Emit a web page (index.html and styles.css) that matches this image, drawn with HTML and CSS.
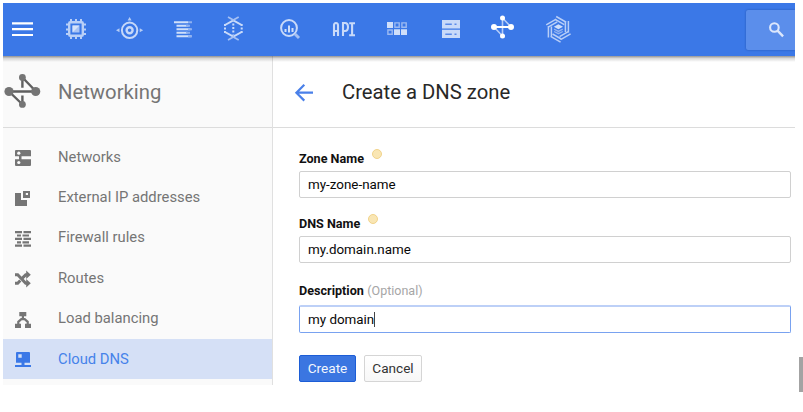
FILE: index.html
```html
<!DOCTYPE html>
<html lang="en">
<head>
<meta charset="utf-8">
<title>Create a DNS zone</title>
<link rel="stylesheet" href="styles.css">
</head>
<body>
<div class="window">
  <header class="topbar">
    <nav class="tools">
      <svg viewBox="7 13 32 32"><path stroke="#fff" stroke-width="2.2" d="M12 23.4h21M12 29.2h21M12 35h21"/></svg>
      <svg viewBox="60 13 32 32"><g fill="none" stroke="#b9cff7"><rect x="69.2" y="22.2" width="13.6" height="13.6" rx="1" stroke-width="2.4"/><path stroke-width="2" d="M71 19v3M76 19v3M81 19v3M71 36v3M76 36v3M81 36v3M66 24.5h3M66 29.5h3M66 34h3M83 24.5h3M83 29.5h3M83 34h3"/></g><path fill="#a9c3f4" d="M72.5 25.5h7v7h-7z"/><path fill="#d6e3fb" d="M72.5 25.5h7l-7 7z"/></svg>
      <svg viewBox="113 13 32 32"><g fill="none" stroke="#c6d8f9" stroke-width="2"><circle cx="129.6" cy="30.3" r="7.7"/><circle cx="129.6" cy="30.3" r="3" stroke-width="2.4"/></g><path fill="#b5ccf6" d="M129.6 17l2 3.5h-4zM116 30.3l3.5-2v4zM143.2 30.3l-3.5-2v4z"/></svg>
      <svg viewBox="166 13 32 32"><path stroke="#d0dffa" stroke-width="2" d="M174 22.3h14M176.5 25.8h12M176.5 29.3h14M176.5 32.7h11M176.5 36.2h15"/><path stroke="#8eb0f0" stroke-width="2" d="M188 22.3h4M186 25.8h4M188 29.3h4M186 32.7h4M188 36.2h4"/></svg>
      <svg viewBox="219 13 32 32"><g fill="none" stroke="#c9daf9" stroke-width="2"><path d="M225 25l8.3-4.7 8.4 4.7M225 32l8.3 4.7 8.4-4.7"/><path stroke-dasharray="2 1.5" d="M225 24v9M233.3 23.5v11M241.7 24v9"/></g><path fill="none" stroke="#a5c0f3" stroke-width="1.7" d="M228 17l5.3 3 5.4-3M228 40l5.3-3 5.4 3"/></svg>
      <svg viewBox="272 13 32 32"><circle cx="289" cy="28" r="7.9" fill="none" stroke="#c9daf9" stroke-width="2"/><path stroke="#a5c0f3" stroke-width="3" d="M295 34l4 4"/><path stroke="#d0dffa" stroke-width="2" d="M285.5 29v3M289 25.5v7M292.5 28v4"/></svg>
      <svg viewBox="325 13 32 32"><g fill="none" stroke="#c9daf9" stroke-width="2.1"><path d="M334 36V25.5q0-2.5 2-2.5t2 2.5V36M334 31h4M343 36V23h2q3 0 3 4t-3 4h-2M349.2 23.3h5.8M349.2 35.3h5.8M352.1 23v12"/></g></svg>
      <svg viewBox="378 13 32 32"><path fill="#d0dffa" d="M387 22h6v6h-6zM394 29.3h6v5.7h-6zM401 29.3h6v5.7h-6z"/><path fill="none" stroke="#9dbaf2" stroke-width="1.4" d="M394.9 22.9h4.3v4.3h-4.3zM401.9 22.9h4.3v4.3h-4.3zM387.9 30h4.3v4.3h-4.3z"/></svg>
      <svg viewBox="431 13 32 32"><path fill="#c9daf9" d="M442 20h18v8.4h-18zM442 29.8h18v8.2h-18z"/><path stroke="#5989e9" stroke-width="1.6" d="M445.3 24.2h6.5M454.5 24.2h2M445.3 34.2h6.5M454.5 34.2h2"/></svg>
      <svg viewBox="484 13 32 32"><path fill="none" stroke="#b6cdf7" stroke-width="1.6" d="M511 27l-8.5-9M494 27l8.5 9M502.5 18v18"/><path stroke="#fff" stroke-width="2" d="M494 27h17"/><g fill="#fff"><circle cx="494" cy="27" r="3"/><circle cx="511" cy="27" r="3"/><circle cx="502.5" cy="18" r="2.5"/><circle cx="502.5" cy="36" r="2.5"/></g></svg>
      <svg viewBox="537 13 32 32"><g fill="none" stroke="#b8cef7" stroke-width="1.5"><path id="blade" d="M568.4 21v11.5M565.4 22v10"/><use href="#blade" transform="rotate(60 558.4 29.3)"/><use href="#blade" transform="rotate(120 558.4 29.3)"/><use href="#blade" transform="rotate(180 558.4 29.3)"/><use href="#blade" transform="rotate(240 558.4 29.3)"/><use href="#blade" transform="rotate(300 558.4 29.3)"/></g><path fill="#d0dffa" d="M553.8 26.8l4.6-2.5 4.6 2.5-4.6 2.5z"/><path fill="none" stroke="#94b4f1" stroke-width="1.3" d="M554 29.2l4.4 2.2 4.4-2.2M554 31.5l4.4 2.2 4.4-2.2"/></svg>
    </nav>
    <div class="search"><svg viewBox="767 20 18 20"><circle cx="774.4" cy="27.5" r="4.3" fill="none" stroke="#dce7fc" stroke-width="2.1"/><path stroke="#dce7fc" stroke-width="2.4" d="M777.5 30.7l5.6 5.6"/></svg></div>
  </header>
  <div class="body">
    <aside class="sidebar">
      <div class="product">
        <svg viewBox="3 73 40 36"><path fill="none" stroke="#606060" stroke-width="2.4" d="M9 91.5h27M36 91.5L22.5 77.5M9 91.5l13.5 13M22.4 78v9.8M22.4 95.5v9"/><g fill="#757575"><circle cx="9" cy="91.5" r="4.6"/><circle cx="35.7" cy="91.5" r="4.6"/><circle cx="22.4" cy="77.4" r="3.4"/><circle cx="22.4" cy="104.4" r="3.4"/></g></svg>
        <span>Networking</span>
      </div>
      <ul class="menu">
        <li><svg viewBox="0 0 16 16"><path d="M1 0h14a1 1 0 0 1 1 1v5.2H6.5v3H16V15a1 1 0 0 1-1 1H1a1 1 0 0 1-1-1V9.2h4v-3H0V1a1 1 0 0 1 1-1z"/><circle class="hole" cx="3.8" cy="3.2" r="1.6"/><circle class="hole" cx="3.8" cy="12.5" r="1.6"/></svg><span>Networks</span></li>
        <li><svg viewBox="0 0 16 16"><path d="M0 2h6v7h6v6H0z"/><path fill-rule="evenodd" d="M8 0h7v7H8zM10.8 1.9v2.2h2.2V1.9z"/></svg><span>External IP addresses</span></li>
        <li><svg viewBox="0 0 16 16"><path d="M0 0h7v2.2H0zM8.5 0H16v2.2H8.5zM2 3.4h4v2.2H2zM7.5 3.4H14v2.2H7.5zM0 6.8h7V9H0zM8.5 6.8H16V9H8.5zM2 10.2h4v2.2H2zM7.5 10.2H14v2.2H7.5zM0 13.6h7v2.2H0zM8.5 13.6H16v2.2H8.5z"/></svg><span>Firewall rules</span></li>
        <li><svg viewBox="0 0 16 16"><path class="line" d="M0 3.8h2.7l8 8.4H13M0 12.2h2.7l2.6-2.7M7.6 6.8l3.1-3H13"/><path d="M11.2-.4l4.6 4.2L11.2 8zM11.2 8l4.6 4.2-4.6 4.2z"/></svg><span>Routes</span></li>
        <li><svg viewBox="0 0 16 16"><path d="M4.3 0h7v4.3h-7zM6.8 4h2.2v4H6.8zM0 11.7h6V16H0zM10 11.7h6V16h-6z"/><path class="thin" d="M3.3 12V9.8l3-2.6h3.4l3 2.6V12"/></svg><span>Load balancing</span></li>
        <li class="active"><svg viewBox="0 0 16 16"><path fill-rule="evenodd" d="M2 0h12a1 1 0 0 1 1 1v9.7H1V1a1 1 0 0 1 1-1zM3.3 2.3v3.5h3.4V2.3zM6.5 10.7v2.3H0v2h16v-2H9.5v-2.3z"/></svg><span>Cloud DNS</span></li>
      </ul>
    </aside>
    <main class="content">
      <div class="heading">
        <svg viewBox="295 84 18 18"><path fill="none" stroke="#4a80e9" stroke-width="2.2" d="M313 92.7h-16M304.3 84.8l-7.9 7.9 7.9 7.9"/></svg>
        <h1>Create a DNS zone</h1>
      </div>
      <form class="form">
        <div class="label">Zone Name<i class="hint"></i></div>
        <div class="input">my-zone-name</div>
        <div class="label">DNS Name<i class="hint"></i></div>
        <div class="input">my.domain.name</div>
        <div class="label last">Description <span class="optional">(Optional)</span></div>
        <div class="input focus">my domain<i class="caret"></i></div>
        <div class="actions"><button type="button" class="primary">Create</button><button type="button">Cancel</button></div>
      </form>
    </main>
  </div>
</div>
<div class="scrollbar"></div>
</body>
</html>
```
FILE: styles.css
```css
* { box-sizing: border-box; }
body {
  margin: 0;
  height: 412px;
  padding: 3px 0 0 3px;
  display: flex;
  justify-content: space-between;
  background: #fff;
  font-family: Roboto, "Liberation Sans", sans-serif;
  overflow: hidden;
}
svg { display: block; overflow: visible; flex: none; }
.window { width: 792px; height: 382px; }
.topbar {
  position: relative;
  height: 53px;
  padding-left: 4px;
  display: flex;
  justify-content: space-between;
  align-items: center;
  background: #3b78e7;
}
.topbar::after {
  content: "";
  position: absolute;
  left: 0;
  right: 0;
  top: 100%;
  height: 6px;
  background: linear-gradient(rgba(0,0,0,.42), rgba(0,0,0,.15) 40%, rgba(0,0,0,0));
}
.tools { display: flex; gap: 21px; padding-bottom: 1px; }
.tools svg { width: 32px; height: 32px; }
.search {
  width: 49px;
  height: 40px;
  padding: 10px 0 0 21px;
  background: #5b8eeb;
  border-radius: 2px 0 0 2px;
  box-shadow: 0 0 2px rgba(20,60,140,.65);
  clip-path: inset(-3px 0 -3px -3px);
}
.search svg { width: 18px; height: 20px; }
.body { display: flex; height: 329px; }
.sidebar { width: 270px; background: #fafafa; border-right: 1px solid #e0e0e0; }
.product {
  height: 72px;
  display: flex;
  align-items: center;
  border-bottom: 1px solid #dcdcdc;
  color: #757575;
  font-size: 20.3px;
}
.product svg { width: 40px; height: 36px; margin: 0 15px 1px 0; }
.product span { padding-top: 1px; }
.menu { list-style: none; margin: 0; padding: 9px 0 0; }
.menu li {
  height: 40.4px;
  padding: 0 0 1px 12px;
  display: flex;
  align-items: center;
  gap: 27px;
  color: #757575;
  fill: #757575;
  font-size: 14.8px;
}
.menu svg { width: 16px; height: 16px; margin-top: 3px; }
.menu .hole { fill: #fafafa; }
.menu .line { fill: none; stroke: #757575; stroke-width: 3; }
.menu .thin { fill: none; stroke: #757575; stroke-width: 2.2; }
.menu .active { background: #d5e0f6; color: #4683ea; fill: #3b78e7; }
.content { flex: 1; }
.heading {
  height: 72px;
  padding: 0 0 0 22px;
  display: flex;
  align-items: center;
  gap: 29px;
  border-bottom: 1px solid #dcdcdc;
}
.heading svg { width: 18px; height: 18px; margin-top: 3px; }
h1 { margin: 0; padding-top: 1px; color: #282828; font-size: 20.25px; font-weight: 400; }
.form { padding: 20px 4px 0 26px; }
.label { height: 23px; padding-top: 3px; display: flex; gap: 4px; color: #111; font-size: 12.6px; line-height: 16px; font-weight: 700; }
.hint { width: 10px; height: 10px; margin: -2px 0 0 4px; border: 1px solid #f1d38b; border-radius: 50%; background: #f9e6b4; }
.optional { margin-left: -.5px; color: #a6a6a6; font-size: 12.5px; font-weight: 400; }
.input {
  height: 27px;
  margin-bottom: 15px;
  padding: 0 0 0 8px;
  display: flex;
  align-items: center;
  border: 1px solid #d0d0d0;
  border-radius: 2px;
  color: #080808;
  font-size: 13.4px;
}
.last { height: 27px; padding-top: 5px; }
.focus { height: 28px; margin-bottom: 22px; padding-bottom: 1px; border: 1px solid #79a2f0; border-top: 2px solid #bdd0f7; }
.caret { width: 1px; height: 15px; background: #444; }
.actions { display: flex; gap: 8px; }
button {
  width: 58px;
  height: 27px;
  padding: 0 0 1px;
  border: 1px solid #d5d5d5;
  border-radius: 2px;
  background: linear-gradient(#fff, #f7f7f7);
  color: #333;
  font: 13.6px Roboto, "Liberation Sans", sans-serif;
}
.primary { width: 57px; border-color: #1c5dd6; background: #3b76e1; color: #f3f6fd; }
.scrollbar { width: 4px; height: 35px; margin-top: 354px; background: #a3a3a3; }
```
